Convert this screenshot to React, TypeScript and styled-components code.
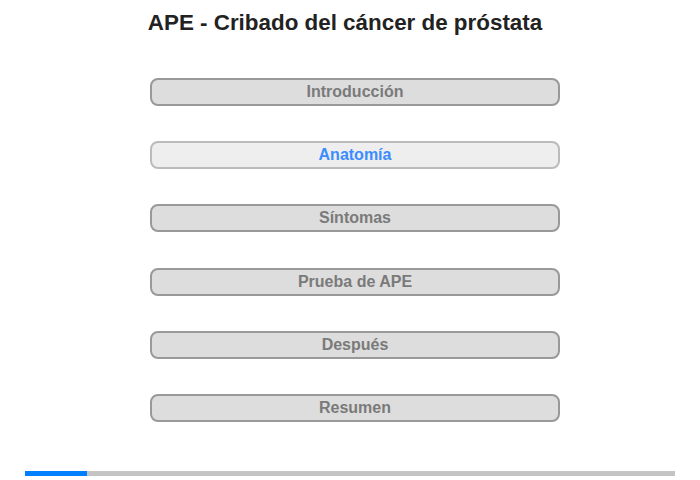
import React from "react";
import styled, { createGlobalStyle } from "styled-components";

const Global = createGlobalStyle`
  html, body { margin: 0; padding: 0; background: #fff; }
  body { font-family: "Liberation Sans", Arial, sans-serif; }
`;

const Page = styled.div`
  width: 700px;
  height: 480px;
  display: flex;
  flex-direction: column;
`;

const Title = styled.h1`
  margin: 0;
  padding-top: 8px;
  height: 31px;
  font-size: 22.4px;
  line-height: 30px;
  font-weight: bold;
  color: #222;
  text-align: center;
  margin-left: -10px;
`;

const Menu = styled.nav`
  margin-top: 39px;
  margin-left: 150px;
  width: 410px;
  display: flex;
  flex-direction: column;
  gap: 35.2px;
`;

const Item = styled.div<{ $active?: boolean }>`
  box-sizing: border-box;
  height: 28px;
  border: 2px solid ${(p) => (p.$active ? "#bbb" : "#999")};
  border-radius: 8px;
  background: ${(p) => (p.$active ? "#eee" : "#ddd")};
  color: ${(p) => (p.$active ? "#3b8cff" : "#7a7a7a")};
  font-size: 16px;
  font-weight: bold;
  display: flex;
  align-items: center;
  justify-content: center;
  line-height: 1;
`;

const Progress = styled.div`
  margin-top: auto;
  margin-bottom: 4px;
  margin-left: 25px;
  width: 650px;
  height: 5px;
  background: #c4c4c4;
  display: flex;
`;

const Fill = styled.div`
  height: 100%;
  background: #0080ff;
`;

const items = ["Introducción", "Anatomía", "Síntomas", "Prueba de APE", "Después", "Resumen"];

export default function App() {
  return (
    <Page>
      <Global />
      <Title>APE - Cribado del cáncer de próstata</Title>
      <Menu>
        {items.map((t, i) => (
          <Item key={t} $active={i === 1}>
            {t}
          </Item>
        ))}
      </Menu>
      <Progress>
        <Fill style={{ width: `${(62 / 650) * 100}%` }} />
      </Progress>
    </Page>
  );
}
